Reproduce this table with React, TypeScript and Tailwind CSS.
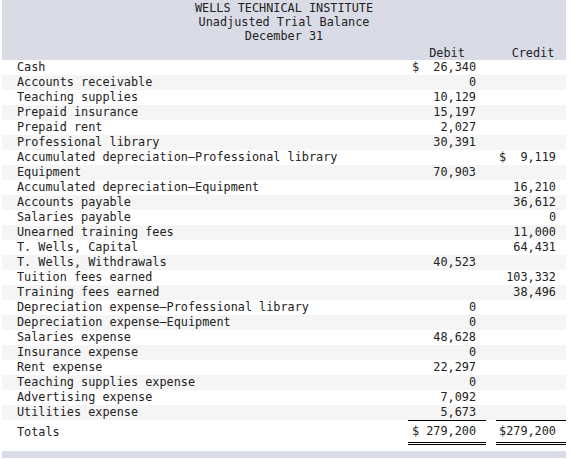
import React from 'react';

type Row = [string, string, string];

const ROWS: Row[] = [
  ['Cash', '$  26,340', ''],
  ['Accounts receivable', '0', ''],
  ['Teaching supplies', '10,129', ''],
  ['Prepaid insurance', '15,197', ''],
  ['Prepaid rent', '2,027', ''],
  ['Professional library', '30,391', ''],
  ['Accumulated depreciation—Professional library', '', '$  9,119'],
  ['Equipment', '70,903', ''],
  ['Accumulated depreciation—Equipment', '', '16,210'],
  ['Accounts payable', '', '36,612'],
  ['Salaries payable', '', '0'],
  ['Unearned training fees', '', '11,000'],
  ['T. Wells, Capital', '', '64,431'],
  ['T. Wells, Withdrawals', '40,523', ''],
  ['Tuition fees earned', '', '103,332'],
  ['Training fees earned', '', '38,496'],
  ['Depreciation expense—Professional library', '0', ''],
  ['Depreciation expense—Equipment', '0', ''],
  ['Salaries expense', '48,628', ''],
  ['Insurance expense', '0', ''],
  ['Rent expense', '22,297', ''],
  ['Teaching supplies expense', '0', ''],
  ['Advertising expense', '7,092', ''],
  ['Utilities expense', '5,673', ''],
];

export default function App() {
  return (
    <div className="w-[574px] h-[460px] bg-white pl-[2px] pr-[8px] font-['DejaVu_Sans_Mono',monospace] text-[11.83px] text-[#222]">
      {/* Header */}
      <div className="bg-[#d9dce6] pt-[1px] h-[60px] flex flex-col">
        <div className="text-center leading-[14px]">WELLS TECHNICAL INSTITUTE</div>
        <div className="text-center leading-[14px]">Unadjusted Trial Balance</div>
        <div className="text-center leading-[14px]">December 31</div>
        <div className="flex mt-[3px] leading-[14px]">
          <div className="flex-1" />
          <div className="w-[78px] text-center">Debit</div>
          <div className="w-[10px]" />
          <div className="w-[70px] text-center pl-[4px]">Credit</div>
        </div>
      </div>

      {/* Accounts */}
      {ROWS.map(([label, debit, credit], i) => (
        <div
          key={label}
          className={`flex h-[15px] leading-[15px] ${i % 2 === 1 ? 'bg-[#f5f5f5]' : 'bg-white'}`}
        >
          <div className="flex-1 pl-[15px] whitespace-pre">{label}</div>
          <div className="w-[78px] pr-[10px] text-right whitespace-pre">{debit}</div>
          <div className="w-[10px]" />
          <div className="w-[70px] pr-[10px] text-right whitespace-pre">{credit}</div>
        </div>
      ))}

      {/* Totals */}
      <div className="flex">
        <div className="flex-1 pl-[15px] pt-[5px] leading-[15px]">Totals</div>
        <div className="w-[78px] pr-[10px] text-right whitespace-pre border-t border-b-[3px] border-double border-t-black border-b-black h-[25px] leading-[21px]">
          $ 279,200
        </div>
        <div className="w-[10px]" />
        <div className="w-[70px] pr-[10px] text-right whitespace-pre border-t border-b-[3px] border-double border-t-black border-b-black h-[25px] leading-[21px]">
          $279,200
        </div>
      </div>

      <div className="mt-[6px] h-[7px] bg-[#d9dce6]" />
    </div>
  );
}
